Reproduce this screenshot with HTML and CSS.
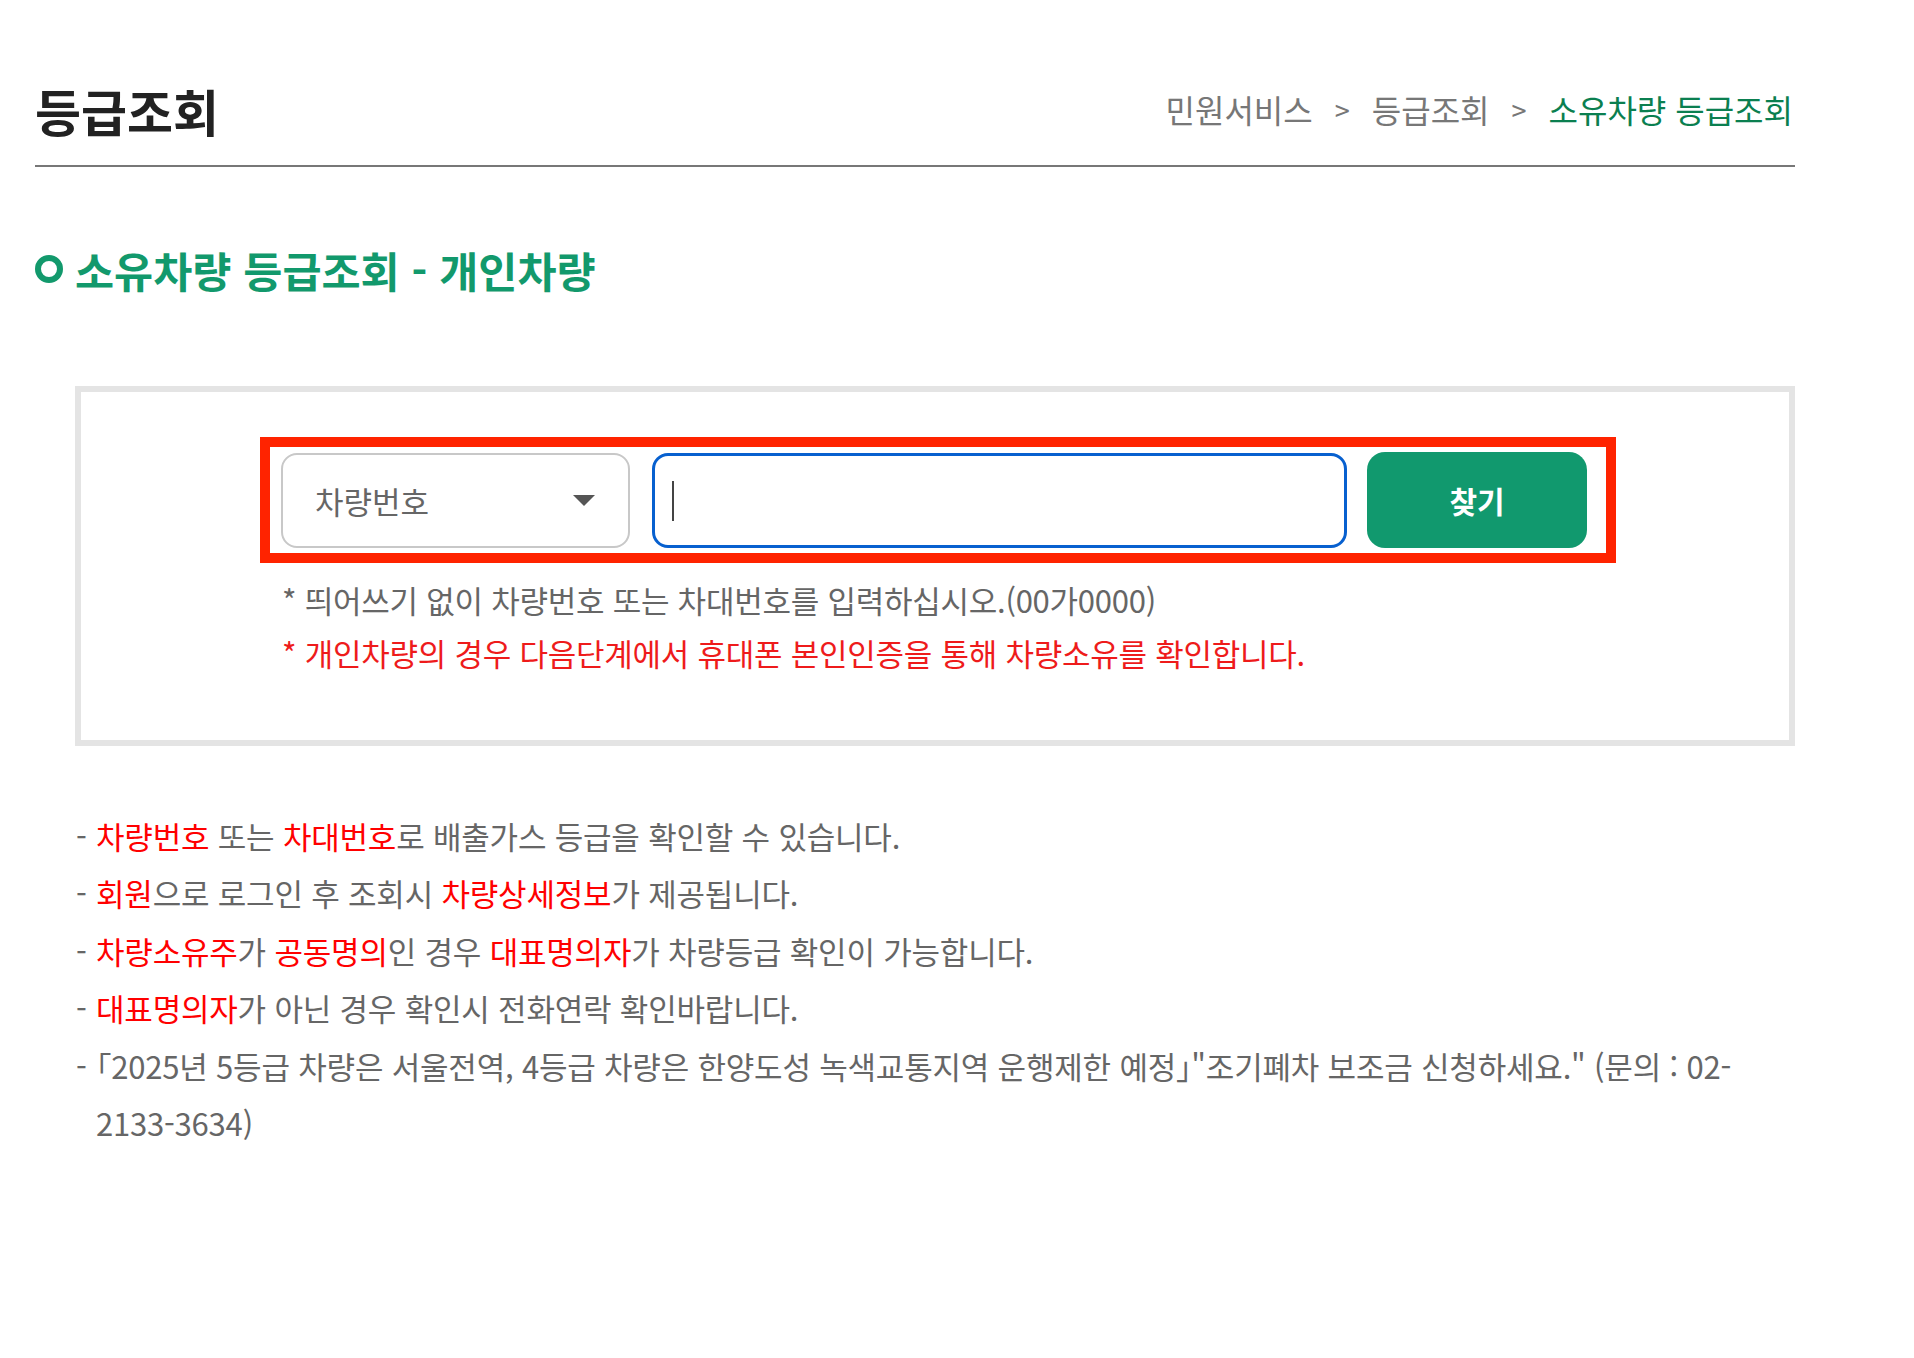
FILE: index.html
```html
<!DOCTYPE html>
<html lang="ko">
<head>
  <meta charset="UTF-8" />
  <meta name="viewport" content="width=device-width, initial-scale=1.0"/>
  <title>등급조회</title>
  <link rel="stylesheet" href="styles.css">
</head>
<body>

<div class="page">
  <div class="page-head">
    <h2 class="page-title">등급조회</h2>
    <div class="location">
      <span>민원서비스</span>
      <span class="sep">&gt;</span>
      <span>등급조회</span>
      <span class="sep">&gt;</span>
      <span class="current">소유차량 등급조회</span>
    </div>
  </div>

  <h3 class="sub-title"><span class="dot"></span>소유차량 등급조회 - 개인차량</h3>

  <div class="search-box">
    <form class="search-form" onsubmit="return false;">
      <div class="select-wrap">
        <select class="search-type">
          <option>차량번호</option>
          <option>차대번호</option>
        </select>
      </div>
      <div class="input-wrap">
        <input type="text" class="search-input" autofocus>
      </div>
      <button type="submit" class="search-btn">찾기</button>
    </form>
    <p class="help">* 띄어쓰기 없이 차량번호 또는 차대번호를 입력하십시오.(00가0000)</p>
    <p class="help red">* 개인차량의 경우 다음단계에서 휴대폰 본인인증을 통해 차량소유를 확인합니다.</p>
  </div>

  <ul class="notice">
    <li><span class="dash">-</span><span><em>차량번호</em> 또는 <em>차대번호</em>로 배출가스 등급을 확인할 수 있습니다.</span></li>
    <li><span class="dash">-</span><span><em>회원</em>으로 로그인 후 조회시 <em>차량상세정보</em>가 제공됩니다.</span></li>
    <li><span class="dash">-</span><span><em>차량소유주</em>가 <em>공동명의</em>인 경우 <em>대표명의자</em>가 차량등급 확인이 가능합니다.</span></li>
    <li><span class="dash">-</span><span><em>대표명의자</em>가 아닌 경우 확인시 전화연락 확인바랍니다.</span></li>
    <li><span class="dash">-</span><span>「2025년 5등급 차량은 서울전역, 4등급 차량은 한양도성 녹색교통지역 운행제한 예정」"조기폐차 보조금 신청하세요." (문의 : 02-<br>2133-3634)</span></li>
  </ul>
</div>

</body>
</html>
```

FILE: styles.css
```css
body {
  margin: 0;
  background: #fff;
  font-family: "Noto Sans CJK KR", "Noto Sans", sans-serif;
  color: #666;
}
.page {
  width: 1760px;
  padding-left: 35px;
}
.page-head {
  display: flex;
  justify-content: space-between;
  align-items: center;
  height: 110px;
  margin-top: 55px;
  border-bottom: 2px solid #777;
}
.page-title {
  margin: 0;
  font-size: 50px;
  font-weight: 700;
  color: #222;
}
.location {
  display: flex;
  gap: 22px;
  font-size: 32px;
  color: #777;
  padding-right: 2px;
}
.location .sep {
  font-size: 27px;
  line-height: 48px;
}
.location .current {
  color: #0b7f50;
}
.sub-title {
  display: flex;
  align-items: center;
  gap: 12px;
  margin: 72px 0 0;
  height: 60px;
  font-size: 42.5px;
  font-weight: 700;
  color: #12996c;
}
.dot {
  width: 16px;
  height: 16px;
  border: 6px solid #12996c;
  border-radius: 50%;
}
.search-box {
  margin: 87px 0 0 40px;
  border: 6px solid #e4e4e4;
  padding: 45px 0 0 179px;
  width: 1529px;
  height: 303px;
}
.search-form {
  display: flex;
  align-items: center;
  width: 1306px;
  padding: 5px 19px 5px 11px;
  border: 10px solid #ff2300;
}
.select-wrap,
.input-wrap {
  position: relative;
}
.select-wrap::after {
  content: "";
  position: absolute;
  right: 35px;
  top: 42px;
  border-left: 11px solid transparent;
  border-right: 11px solid transparent;
  border-top: 11px solid #555;
  pointer-events: none;
}
/* text cursor of the focused field */
.input-wrap::after {
  content: "";
  position: absolute;
  left: 42px;
  top: 28px;
  width: 2px;
  height: 40px;
  background: #444;
}
.search-type {
  appearance: none;
  width: 349px;
  height: 95px;
  padding: 0 32px;
  border: 2px solid #c8c8c8;
  border-radius: 16px;
  background: #fff;
  font-family: inherit;
  font-size: 31px;
  color: #666;
}
.search-input {
  display: block;
  width: 695px;
  height: 95px;
  margin-left: 22px;
  padding: 0 18px;
  box-sizing: border-box;
  border: 3px solid #0760cf;
  border-radius: 16px;
  outline: none;
  font-family: inherit;
  font-size: 31px;
  caret-color: transparent;
}
.search-btn {
  width: 220px;
  height: 96px;
  margin-left: 20px;
  border: none;
  border-radius: 18px;
  background: #11996e;
  color: #fff;
  font-family: inherit;
  font-size: 30px;
  font-weight: 700;
  cursor: pointer;
}
.help {
  margin: 0;
  padding-left: 22px;
  font-size: 31px;
  line-height: 53px;
  letter-spacing: -0.25px;
  color: #666;
}
.search-form + .help {
  margin-top: 10px;
}
.help.red {
  color: #ee1b1b;
}
.notice {
  list-style: none;
  margin: 61px 0 0 41px;
  padding: 0;
  font-size: 31px;
  line-height: 57.4px;
  letter-spacing: -0.2px;
  color: #666;
  font-feature-settings: "halt";
}
.notice li {
  display: flex;
}
.notice .dash {
  flex: none;
  width: 20px;
}
.notice em {
  font-style: normal;
  color: #f00;
}
```
